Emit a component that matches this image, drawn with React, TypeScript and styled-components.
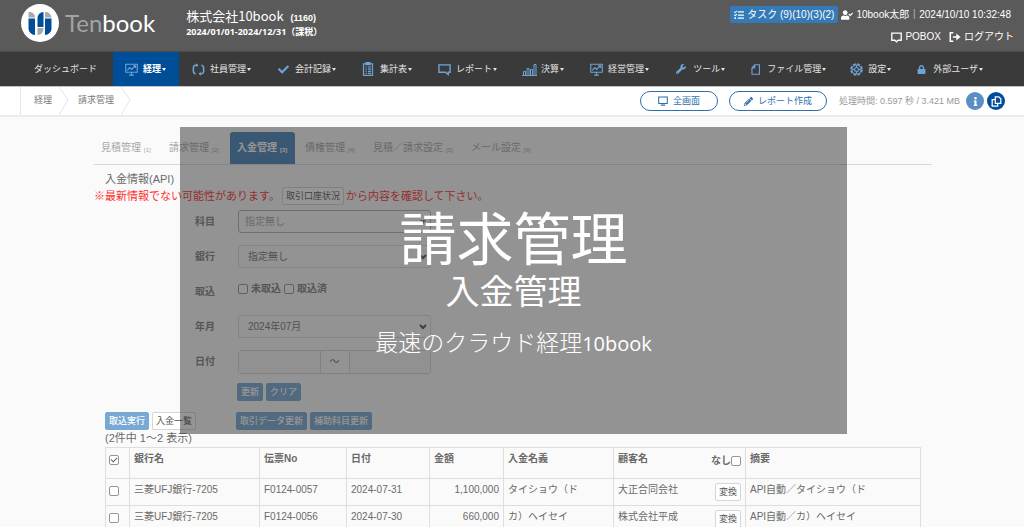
import React from "react";
import styled, { createGlobalStyle, css } from "styled-components";
import {
  FaTasks,
  FaUserCheck,
  FaPencilAlt,
  FaInfo,
  FaCheck,
  FaWrench,
  FaLock,
} from "react-icons/fa";

const blue = "#004e98";
const skyBlue = "#6ea3d8";
const softBlue = "#78a8d4";
const line = "#dedede";

const GlobalStyle = createGlobalStyle`
  *, *::before, *::after { box-sizing: border-box; }
  html { scrollbar-width: none; background: #fafafa; }
  body {
    margin: 0;
    font-family: "Liberation Sans", "Noto Sans CJK JP", sans-serif;
    font-size: 10px;
    line-height: 14px;
    color: #6a6a6a;
  }
  button, input, select { font: inherit; color: inherit; margin: 0; }
  a { color: inherit; text-decoration: none; }
  svg { display: block; flex: none; }
`;

/* ---------- header ---------- */

const Header = styled.header`
  display: flex;
  justify-content: space-between;
  min-height: 52px;
  padding: 0 10px 0 21px;
  background: #5a5a5a;
  border-bottom: 1px solid #4a4a4a;
  color: #fff;
`;

const Brand = styled.div`
  display: flex;
  align-items: flex-start;
  gap: 6px;
  padding-top: 4px;
`;

const Wordmark = styled.a`
  font-family: Lato, sans-serif;
  font-weight: 400;
  font-size: 24px;
  line-height: 38px;
  color: #fff;
  span { color: #a3a3a3; font-weight: 400; }
`;

const Company = styled.div`
  display: flex;
  flex-direction: column;
  padding: 3px 0 0 25px;
`;

const CompanyName = styled.h1`
  margin: 0;
  font-family: "Noto Sans CJK JP", sans-serif;
  font-size: 13px;
  line-height: 18px;
  font-weight: 400;
  small { font: 700 9px "Liberation Sans", sans-serif; margin-left: 4px; }
`;

const Period = styled.p`
  margin: 0;
  font-family: "Noto Sans", "Noto Sans CJK JP", sans-serif;
  font-size: 9px;
  line-height: 14px;
  font-weight: 700;
`;

const HeaderSide = styled.div`
  display: flex;
  flex-direction: column;
  gap: 6px;
  padding-top: 6px;
`;

const HeaderLine = styled.div<{ $inset?: number; $gap?: number }>`
  display: flex;
  align-items: center;
  justify-content: flex-end;
  gap: ${(p) => p.$gap ?? 3}px;
  min-height: 16px;
  padding-right: ${(p) => p.$inset ?? 0}px;
`;

const TaskButton = styled.button`
  display: flex;
  align-items: center;
  gap: 3px;
  height: 17px;
  padding: 0 4px;
  border: 0;
  border-radius: 2px;
  background: #337ab7;
  color: #fff;
`;

const HeaderLink = styled.a`
  display: flex;
  align-items: center;
  gap: 3px;
`;

/* ---------- navigation ---------- */

const Nav = styled.nav`
  display: flex;
  height: 34px;
  padding-left: 17px;
  background: #3a3a3a;
  color: #e4e4e4;
  font-size: 9px;
  white-space: nowrap;
`;

const NavItem = styled.a<{ $active?: boolean; $tight?: boolean; $plain?: boolean }>`
  display: flex;
  flex: none;
  align-items: center;
  padding: 0 ${(p) => (p.$plain ? 16 : p.$tight ? 11 : 13)}px 0 ${(p) => (p.$plain ? 17 : p.$active ? 11 : 12)}px;
  ${(p) =>
    p.$active &&
    css`
      background: ${blue};
      color: #fff;
      font-weight: 700;
    `}
`;

const NavIcon = styled.span`
  display: flex;
  justify-content: center;
  width: 14px;
  margin-right: 5px;
  color: ${skyBlue};
`;

const Caret = styled.span`
  margin-left: 1px;
  border: solid transparent;
  border-width: 3px 2px 0;
  border-top-color: currentColor;
`;

/* ---------- breadcrumb bar ---------- */

const SubBar = styled.div`
  display: flex;
  align-items: center;
  justify-content: space-between;
  height: 31px;
  padding: 0 19px 0 20px;
  background: #fff;
  border-top: 1px solid #c4c4c4;
  border-bottom: 2px solid #e9edf2;
  font-size: 9px;
  color: #777;
`;

const Crumbs = styled.ol`
  display: flex;
  height: 28px;
  margin: 0;
  padding: 0 0 0 4px;
  list-style: none;
  border-left: 1px solid #e0e7ee;
  li { display: flex; align-items: center; gap: 7px; padding-left: 9px; }
  a { padding-bottom: 2px; }
`;

const SubActions = styled.div`
  display: flex;
  align-items: center;
`;

const PillButton = styled.button`
  display: flex;
  align-items: center;
  justify-content: center;
  gap: 5px;
  min-width: 78px;
  height: 20px;
  padding: 0 14px;
  margin-right: 11px;
  border: 1px solid #2f6fad;
  border-radius: 10px;
  background: #fff;
  color: #2f6fad;
`;

const Timing = styled.span`
  margin: 0 3px 0 1px;
  color: #999;
`;

const RoundButton = styled.button<{ $tone: string }>`
  display: flex;
  align-items: center;
  justify-content: center;
  width: 18px;
  height: 18px;
  margin-left: 3px;
  padding: 0;
  border: 0;
  border-radius: 50%;
  background: ${(p) => p.$tone};
  color: #fff;
`;

/* ---------- page ---------- */

const Page = styled.main`
  position: relative;
  padding: 15px 92px 0 94px;
`;

const Tabs = styled.nav`
  display: flex;
  gap: 3px;
  border-bottom: 1px solid #d8d8d8;
`;

const Tab = styled.a<{ $active?: boolean }>`
  display: flex;
  align-items: center;
  height: 32px;
  padding: 0 7px;
  border-radius: 3px 3px 0 0;
  color: #a8a8a8;
  small { min-width: 8px; margin: 4px 0 0 3px; font-size: 6px; line-height: 8px; }
  ${(p) =>
    p.$active &&
    css`
      background: #4984bb;
      color: #fff;
      font-weight: 700;
    `}
`;

const Body = styled.div`
  padding: 0 11px;
`;

const SectionTitle = styled.h2`
  margin: 6px 0 0;
  font-size: 11px;
  line-height: 16px;
  font-weight: 400;
`;

const Notice = styled.p`
  display: flex;
  align-items: center;
  gap: 2px;
  margin: 0 0 5px -11px;
  color: #ff3030;
  font-size: 11px;
  line-height: 18px;
`;

const SmallButton = styled.button<{ $primary?: boolean }>`
  height: 18px;
  padding: 0 3px;
  border: 1px solid ${(p) => (p.$primary ? softBlue : "#d6d6d6")};
  border-radius: 2px;
  background: ${(p) => (p.$primary ? softBlue : "#fff")};
  color: ${(p) => (p.$primary ? "#fff" : "#555")};
  font-size: 9px;
  line-height: 14px;
  font-weight: ${(p) => (p.$primary ? 500 : 400)};
  white-space: nowrap;
`;

const Form = styled.form`
  display: grid;
  grid-template-columns: 43px 193px;
  grid-auto-rows: 23px;
  row-gap: 12px;
  align-items: center;
  padding-left: 90px;
`;

const Label = styled.label`
  font-weight: 700;
  color: #808080;
`;

const SelectBox = styled.div`
  display: flex;
  align-items: center;
  justify-content: flex-end;
  svg { position: absolute; margin-right: 4px; pointer-events: none; }
`;

const Select = styled.select<{ $strong?: boolean }>`
  appearance: none;
  width: 100%;
  height: 23px;
  padding: 0 18px 0 ${(p) => (p.$strong ? 6 : 9)}px;
  border: 1px solid ${(p) => (p.$strong ? "#b0b0b0" : "#dadada")};
  border-radius: 3px;
  background: transparent;
  color: ${(p) => (p.$strong ? "#a8a8a8" : "#777")};
`;

const Checks = styled.div`
  display: flex;
  align-items: center;
  gap: 3px;
  padding-bottom: 5px;
  font-weight: 700;
  color: #808080;
  label { display: flex; align-items: center; gap: 3px; }
`;

const Check = styled.input.attrs({ type: "checkbox" })`
  appearance: none;
  display: inline-block;
  position: relative;
  flex: none;
  width: 10px;
  height: 10px;
  border: 1px solid #959595;
  border-radius: 2px;
  vertical-align: middle;
  background: #fff;
  &:checked::after {
    content: "";
    position: absolute;
    inset: 1px 1px 3px;
    border: solid #666;
    border-width: 0 0 1px 1px;
    transform: rotate(-45deg);
  }
`;

const DateRange = styled.div`
  display: flex;
  height: 24px;
  border: 1px solid #d6d6d6;
  border-radius: 3px;
  input { flex: 1; min-width: 0; border: 0; padding: 0 6px; background: #f6f6f6; }
  span { width: 30px; border: solid #d6d6d6; border-width: 0 1px; text-align: center; line-height: 22px; }
`;

const FormButtons = styled.div`
  display: flex;
  gap: 3px;
  padding: 10px 0 0 132px;
`;

const Toolbar = styled.div`
  display: flex;
  padding-top: 11px;
`;

const ToolGroup = styled.div<{ $width?: number }>`
  display: flex;
  gap: 3px;
  flex: none;
  width: ${(p) => (p.$width ? `${p.$width}px` : "auto")};
`;

const Count = styled.p`
  margin: 0;
  font-size: 11px;
  line-height: 16px;
`;

const Table = styled.table`
  width: 100%;
  margin-top: 1px;
  border-collapse: collapse;
  table-layout: fixed;
  th, td {
    border: 1px solid ${line};
    padding: 4px;
    text-align: left;
    vertical-align: top;
    white-space: nowrap;
  }
  th { height: 31px; }
  td { height: 27px; }
`;

const CheckCell = styled.td`
  &&& { padding: 5px 0 0 3px; }
`;

const AmountCell = styled.td`
  &&& { text-align: right; }
`;

const Split = styled.div`
  display: flex;
  justify-content: space-between;
  label { display: flex; align-items: center; padding-top: 2px; }
`;

/* ---------- overlay ---------- */

const Overlay = styled.section`
  position: absolute;
  top: 10px;
  left: 180px;
  right: 177px;
  height: 307px;
  padding-top: 68px;
  background: rgba(44, 44, 44, 0.5);
  color: #fff;
  text-align: center;
  font-family: "Noto Sans CJK JP", sans-serif;
  h2, h3, p { margin: 0; font-weight: 400; }
  h2 { font-size: 57px; line-height: 80px; }
  h3 { font-size: 34px; line-height: 30px; }
  p { margin-top: 20px; font-size: 23px; line-height: 32px; font-weight: 300; }
  span { font-family: "Open Sans", sans-serif; font-size: 20px; font-weight: 400; }
`;

/* ---------- drawings ---------- */

const Logo = () => (
  <svg width="38" height="38" viewBox="0 0 38 38">
    <circle cx="19" cy="19" r="19" fill="#fff" />
    <path d="M7.500 13.500V8H9a5 5 0 0 1 5 5.500z" fill="#a9a9a9" />
    <path d="M7.500 14.500H14V31a6.500 6.500 0 0 1-6.500-6.500z" fill={blue} />
    <path d="M16.500 23V14a6 6 0 0 1 6-6v15z" fill={blue} />
    <path d="M16.500 24h6v1a6 6 0 0 1-6 6z" fill="#a9a9a9" />
    <path d="M24 8a6 6 0 0 1 6.500 5.500H24z" fill="#a9a9a9" />
    <path d="M24 14.500h6.500v10A6.500 6.500 0 0 1 24 31z" fill={blue} />
  </svg>
);

const Stroke = ({ size = 13, children }: { size?: number; children: React.ReactNode }) => (
  <svg width={size} height={size} viewBox="0 0 14 14" fill="none" stroke="currentColor" strokeWidth="1.2">
    {children}
  </svg>
);

const MonitorChart = () => (
  <Stroke>
    <path d="M.8 1.3h12.4v8.6H.8zM4.500 13h5M7 10v3M2.500 8l2.600-3 2 2 4-4M8.800 3h2.500v2.400" />
  </Stroke>
);
const Cycle = () => (
  <Stroke>
    <path d="M5 2.500H3.800A2.300 2.300 0 0 0 1.500 5v4a2.500 2.500 0 0 0 2.500 2.500M9 11.500h1.200A2.300 2.300 0 0 0 12.500 9V5A2.500 2.500 0 0 0 10 2.500" strokeWidth="1.700" />
    <path d="M4.500.3 7 2.500 4.500 4.700zM9.500 9.300 7 11.500l2.500 2.200z" fill="currentColor" stroke="none" />
  </Stroke>
);
const Clipboard = () => (
  <Stroke size={14}>
    <path d="M2.500 1.800h9v11.500h-9zM5 .7h4v2H5zM4.500 5h1.200M7 5h3M4.500 7.200h1.200M7 7.200h3M4.500 9.400h1.200M7 9.400h3M4.500 11.400h1.200M7 11.400h3" />
  </Stroke>
);
const Speech = () => (
  <Stroke>
    <path d="M1 2h12v8h-2v2.500L8 10H1z" strokeWidth="1.500" />
  </Stroke>
);
const Bars = () => (
  <svg width="15" height="13" viewBox="0 0 15 13" fill="none" stroke="currentColor">
    <path d="M0 12.500h15M1.500 12V8.500h2V12M5 12V5.500h2V12M8.500 12V6.500h2V12M12 12V1.500h2V12" />
  </svg>
);
const Sheet = () => (
  <Stroke size={11}>
    <path d="M6 1h6v12H2.500V5zM6 1v4H2.500" strokeWidth="1.400" />
  </Stroke>
);
const Gear = () => (
  <Stroke>
    <circle cx="7" cy="7" r="6" strokeWidth="1.500" strokeDasharray="3.200 1.512" />
    <circle cx="7" cy="7" r="4.900" />
    <circle cx="7" cy="7" r="2.100" />
    <path d="M7 2.500v2.300M7 9.200v2.300M2.500 7h2.300M9.200 7h2.300" />
  </Stroke>
);
const Screen = () => (
  <Stroke size={10}>
    <path d="M1 1.500h12v9H1zM4 12.800h6" strokeWidth="1.500" />
  </Stroke>
);
const MailBox = () => (
  <Stroke size={11}>
    <path d="M1 1.500h12v9H9L7 12.500 5 10.500H1z" strokeWidth="1.700" />
  </Stroke>
);
const Exit = () => (
  <Stroke size={12}>
    <path d="M5 2H1.500v10H5M4.500 7h6" strokeWidth="1.800" />
    <path d="M8.500 2.800 13.500 7l-5 4.200z" fill="currentColor" stroke="none" />
  </Stroke>
);
const Copy = () => (
  <Stroke size={11}>
    <path d="M5.500 1h4.500l2.500 2.500V9.500h-7zM5 4.500H1.500V13h7v-3" strokeWidth="1.600" />
  </Stroke>
);
const Chevron = () => (
  <svg width="10" height="28" viewBox="0 0 10 28" fill="none" stroke="#dde6ef">
    <path d="M0 0l9 13L0 28" />
  </svg>
);
const Arrow = () => (
  <svg width="8" height="6" viewBox="0 0 8 6" fill="none" stroke="#555" strokeWidth="2">
    <path d="M1 1l3 3 3-3" />
  </svg>
);
const Triangle = () => (
  <svg width="8" height="6" viewBox="0 0 8 6" fill="#777">
    <path d="M1 1h6L4 5z" />
  </svg>
);

/* ---------- data ---------- */

const menu = [
  { label: "経理", icon: <MonitorChart />, active: true },
  { label: "社員管理", icon: <Cycle /> },
  { label: "会計記録", icon: <FaCheck size={11} /> },
  { label: "集計表", icon: <Clipboard /> },
  { label: "レポート", icon: <Speech /> },
  { label: "決算", icon: <Bars /> },
  { label: "経営管理", icon: <MonitorChart /> },
  { label: "ツール", icon: <FaWrench size={10} />, tight: true },
  { label: "ファイル管理", icon: <Sheet />, tight: true },
  { label: "設定", icon: <Gear />, tight: true },
  { label: "外部ユーザ", icon: <FaLock size={9} /> },
];

const tabs = ["見積管理", "請求管理", "入金管理", "債権管理", "見積／請求設定", "メール設定"];

const rows = [
  ["三菱UFJ銀行-7205", "F0124-0057", "2024-07-31", "1,100,000", "タイショウ（ド", "大正合同会社", "API自動／タイショウ（ド"],
  ["三菱UFJ銀行-7205", "F0124-0056", "2024-07-30", "660,000", "カ）ヘイセイ", "株式会社平成", "API自動／カ）ヘイセイ"],
];

const columnWidths = [24, 130, 87, 83, 74, 110, 132];

export default function App() {
  return (
    <>
      <GlobalStyle />
      <Header>
        <Brand>
          <Logo />
          <Wordmark href="#">
            <span>Ten</span>book
          </Wordmark>
          <Company>
            <CompanyName>
              株式会社10book <small>(1160)</small>
            </CompanyName>
            <Period>2024/01/01-2024/12/31（課税）</Period>
          </Company>
        </Brand>
        <HeaderSide>
          <HeaderLine $inset={3}>
            <TaskButton>
              <FaTasks size={10} />
              タスク (9)(10)(3)(2)
            </TaskButton>
            <FaUserCheck size={12} />
            <span>10book太郎｜2024/10/10 10:32:48</span>
          </HeaderLine>
          <HeaderLine $gap={8}>
            <HeaderLink href="#">
              <MailBox />
              POBOX
            </HeaderLink>
            <HeaderLink href="#">
              <Exit />
              ログアウト
            </HeaderLink>
          </HeaderLine>
        </HeaderSide>
      </Header>

      <Nav>
        <NavItem href="#" $plain>ダッシュボード</NavItem>
        {menu.map((m) => (
          <NavItem key={m.label} href="#" $active={m.active} $tight={m.tight}>
            <NavIcon>{m.icon}</NavIcon>
            {m.label}
            <Caret />
          </NavItem>
        ))}
      </Nav>

      <SubBar>
        <Crumbs>
          <li><a href="#">経理</a><Chevron /></li>
          <li><a href="#">請求管理</a><Chevron /></li>
        </Crumbs>
        <SubActions>
          <PillButton><Screen />全画面</PillButton>
          <PillButton><FaPencilAlt size={9} />レポート作成</PillButton>
          <Timing>処理時間: 0.597 秒 / 3.421 MB</Timing>
          <RoundButton $tone="#5a8fc4" aria-label="情報"><FaInfo size={9} /></RoundButton>
          <RoundButton $tone={blue} aria-label="複製"><Copy /></RoundButton>
        </SubActions>
      </SubBar>

      <Page>
        <Tabs>
          {tabs.map((t, i) => (
            <Tab key={t} href="#" $active={i === 2}>
              {t}
              <small>[{i + 1}]</small>
            </Tab>
          ))}
        </Tabs>
        <Body>
          <SectionTitle>入金情報(API)</SectionTitle>
          <Notice>
            ※最新情報でない可能性があります。
            <SmallButton>取引口座状況</SmallButton>
            から内容を確認して下さい。
          </Notice>
          <Form>
            <Label htmlFor="subject">科目</Label>
            <SelectBox>
              <Select id="subject" $strong><option>指定無し</option></Select>
              <Triangle />
            </SelectBox>
            <Label htmlFor="bank">銀行</Label>
            <SelectBox>
              <Select id="bank"><option>指定無し</option></Select>
              <Arrow />
            </SelectBox>
            <Label as="span">取込</Label>
            <Checks>
              <label><Check />未取込</label>
              <label><Check />取込済</label>
            </Checks>
            <Label htmlFor="month">年月</Label>
            <SelectBox>
              <Select id="month"><option>2024年07月</option></Select>
              <Arrow />
            </SelectBox>
            <Label htmlFor="from">日付</Label>
            <DateRange>
              <input id="from" type="text" />
              <span>～</span>
              <input type="text" aria-label="終了日" />
            </DateRange>
          </Form>
          <FormButtons>
            <SmallButton $primary>更新</SmallButton>
            <SmallButton $primary>クリア</SmallButton>
          </FormButtons>
          <Toolbar>
            <ToolGroup $width={131}>
              <SmallButton $primary>取込実行</SmallButton>
              <SmallButton>入金一覧</SmallButton>
            </ToolGroup>
            <ToolGroup>
              <SmallButton $primary>取引データ更新</SmallButton>
              <SmallButton $primary>補助科目更新</SmallButton>
            </ToolGroup>
          </Toolbar>
          <Count>(2件中 1～2 表示)</Count>
          <Table>
            <colgroup>
              {columnWidths.map((w, i) => <col key={i} width={w} />)}
              <col />
            </colgroup>
            <thead>
              <tr>
                <CheckCell as="th"><Check defaultChecked aria-label="すべて選択" /></CheckCell>
                <th>銀行名</th>
                <th>伝票No</th>
                <th>日付</th>
                <th>金額</th>
                <th>入金名義</th>
                <th>
                  <Split>
                    顧客名
                    <label>なし<Check /></label>
                  </Split>
                </th>
                <th>摘要</th>
              </tr>
            </thead>
            <tbody>
              {rows.map((r) => (
                <tr key={r[1]}>
                  <CheckCell><Check aria-label={r[1]} /></CheckCell>
                  <td>{r[0]}</td>
                  <td>{r[1]}</td>
                  <td>{r[2]}</td>
                  <AmountCell>{r[3]}</AmountCell>
                  <td>{r[4]}</td>
                  <td>
                    <Split>
                      {r[5]}
                      <SmallButton>変換</SmallButton>
                    </Split>
                  </td>
                  <td>{r[6]}</td>
                </tr>
              ))}
            </tbody>
          </Table>
        </Body>
        <Overlay>
          <h2>請求管理</h2>
          <h3>入金管理</h3>
          <p>最速のクラウド経理<span>10book</span></p>
        </Overlay>
      </Page>
    </>
  );
}
